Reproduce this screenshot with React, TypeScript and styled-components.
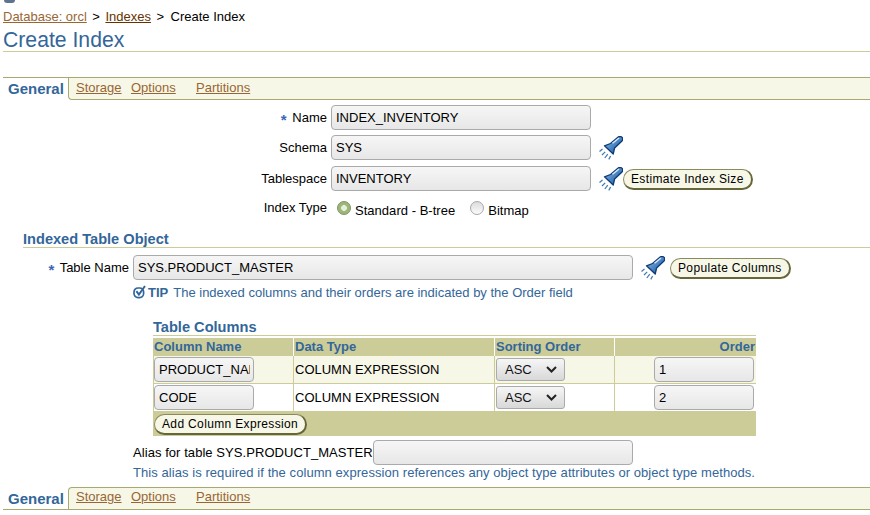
import React from "react";
import styled, { createGlobalStyle } from "styled-components";

const Global = createGlobalStyle`
  html, body { margin: 0; padding: 0; background: #fff; }
  body { font-family: "Liberation Sans", Arial, sans-serif; font-size: 13px; color: #000; }
`;
const Page = styled.div`
  width: 870px;
  height: 515px;
  overflow: hidden;
  box-sizing: border-box;
  padding-left: 3px;
`;
const Sliver = styled.div`
  height: 3px;
  width: 11px;
  margin-left: 1px;
  background: #5f7390;
  border-radius: 0 0 5px 5px;
`;
const Crumbs = styled.div`
  margin-top: 6px;
  height: 15px;
  line-height: 15px;
  display: flex;
  gap: 5.5px;
  white-space: pre;
`;
const CrumbLink = styled.a<{ $dark?: boolean }>`
  color: ${(p) => (p.$dark ? "#663300" : "#996633")};
  text-decoration: underline;
`;
const CrumbHere = styled.span`
  margin-left: 1px;
`;
const Title = styled.h1`
  margin: 0;
  font-size: 21.2px;
  font-weight: 400;
  line-height: 23px;
  height: 23px;
  color: #336699;
  border-bottom: 1px solid #cccc99;
  padding-top: 4px;
`;
const TabBar = styled.div<{ $bottom?: boolean }>`
  display: flex;
  height: 23px;
  margin-top: ${(p) => (p.$bottom ? "7px" : "25px")};
  border-top: ${(p) => (p.$bottom ? "0" : "1px solid #a8a870")};
  border-bottom: ${(p) => (p.$bottom ? "1px solid #a8a870" : "0")};
  box-sizing: border-box;
`;
const ActiveTab = styled.div<{ $bottom?: boolean }>`
  width: 65px;
  box-sizing: border-box;
  padding: ${(p) => (p.$bottom ? "3px 0 0 5px" : "2px 0 0 5px")};
  font-size: 15px;
  font-weight: 700;
  line-height: 18px;
  color: #336699;
`;
const TabStrip = styled.div<{ $bottom?: boolean }>`
  flex: 1;
  display: flex;
  background: #f7f7e7;
  border-left: 1px solid #a8a870;
  border-top: ${(p) => (p.$bottom ? "1px solid #a8a870" : "0")};
  border-radius: ${(p) => (p.$bottom ? "4px 0 0 0" : "0 0 0 4px")};
  border-bottom: ${(p) => (p.$bottom ? "0" : "1px solid #a8a870")};
  padding-top: ${(p) => (p.$bottom ? "1px" : "2px")};
  line-height: 16px;
`;
const TabLink = styled.a<{ $w: number }>`
  color: #996633;
  text-decoration: underline;
  margin-left: 7px;
  width: ${(p) => p.$w}px;
  flex: none;
  white-space: pre;
`;
const FormGrid = styled.div`
  display: grid;
  grid-template-columns: 324px 1fr;
  grid-template-rows: 25px 26px 25px 25px;
  column-gap: 4px;
  row-gap: 5px;
  margin-top: 5px;
`;
const Label = styled.div<{ $lift?: number }>`
  text-align: right;
  line-height: 25px;
  white-space: pre;
  margin-top: ${(p) => (p.$lift ? `${-p.$lift}px` : "0")};
`;
const Star = styled.span`
  color: #3b66b5;
  font-size: 15px;
  font-weight: 700;
  vertical-align: -3px;
  line-height: 0;
  margin-right: 2px;
`;
const FieldLine = styled.div`
  display: flex;
  align-items: center;
  height: 25px;
`;
const TextInput = styled.input<{ $w: number }>`
  width: ${(p) => p.$w}px;
  height: 25px;
  box-sizing: border-box;
  flex: none;
  border: 1px solid #aaaaaa;
  border-radius: 4px;
  background: linear-gradient(180deg, #f6f6f6, #e7e7e7);
  padding: 0 3px 0 4px;
  font: 13px "Liberation Sans", Arial, sans-serif;
  color: #000;
  outline: none;
`;
const PillButton = styled.button<{ $nudge?: boolean }>`
  height: 21px;
  box-sizing: border-box;
  flex: none;
  margin-top: ${(p) => (p.$nudge ? "2px" : "0")};
  padding: 0 7px;
  border: 1px solid #8a8a5c;
  border-right: 2px solid #66663a;
  border-bottom: 2px solid #66663a;
  border-radius: 11px;
  background: #f7f7e7;
  font: 12px "Liberation Sans", Arial, sans-serif;
  letter-spacing: 0.35px;
  color: #000;
  white-space: pre;
`;
const TorchSlot = styled.span<{ $after?: number }>`
  display: inline-flex;
  width: 24px;
  margin-left: 8px;
  margin-right: ${(p) => p.$after ?? 0}px;
  flex: none;
`;
const RadioRow = styled.div`
  display: flex;
  align-items: flex-start;
  height: 25px;
  padding: 5px 0 0 6px;
  box-sizing: border-box;
`;
const Radio = styled.span<{ $on?: boolean }>`
  width: 14px;
  height: 14px;
  flex: none;
  box-sizing: border-box;
  border-radius: 50%;
  border: 1px solid ${(p) => (p.$on ? "#7d9164" : "#a8a8a8")};
  background: ${(p) =>
    p.$on
      ? "radial-gradient(circle, #e9eddc 0 2.6px, #9cb878 3.2px)"
      : "linear-gradient(180deg,#dcdcdc,#fbfbfb)"};
`;
const RadioText = styled.span<{ $gap: number }>`
  margin: 2px ${(p) => p.$gap}px 0 4px;
  line-height: 15px;
  letter-spacing: 0.03px;
`;
const Section = styled.h2`
  margin: 10px 0 0 20px;
  font-size: 14.6px;
  line-height: 16px;
  font-weight: 700;
  color: #336699;
  border-bottom: 1px solid #cccc99;
`;
const TableNameRow = styled.div`
  display: flex;
  align-items: center;
  margin-top: 7px;
`;
const NameLabel = styled.div`
  width: 126px;
  margin-right: 4px;
  text-align: right;
  white-space: pre;
`;
const TipRow = styled.div`
  display: flex;
  align-items: center;
  margin: 4px 0 0 130px;
  height: 16px;
  color: #336699;
  white-space: pre;
`;
const TipWord = styled.b`
  margin: 0 5px 0 2px;
`;
const ColumnsBlock = styled.div`
  margin: 19px 0 0 150px;
  width: 603px;
`;
const ColumnsTitle = styled.div`
  font-size: 14.6px;
  font-weight: 700;
  line-height: 16px;
  color: #336699;
  border-bottom: 1px solid #cccc99;
`;
const Table = styled.table`
  width: 603px;
  margin-top: 2px;
  border-collapse: separate;
  border-spacing: 0;
  table-layout: fixed;
`;
const Head = styled.th<{ $right?: boolean }>`
  background: #cccc99;
  color: #336699;
  font-size: 13px;
  font-weight: 700;
  line-height: 15px;
  height: 18px;
  padding: 0 0 1px 1px;
  box-sizing: border-box;
  text-align: ${(p) => (p.$right ? "right" : "left")};
  border-right: 1px solid #fff;
  &:last-child { border-right: 0; padding-right: 1px; }
`;
const Cell = styled.td<{ $odd?: boolean; $right?: boolean }>`
  background: ${(p) => (p.$odd ? "#f7f7e7" : "#fff")};
  height: 28px;
  padding: 0 0 0 1px;
  box-sizing: border-box;
  border-right: 1px solid #cccc99;
  border-bottom: 1px solid #cccc99;
  text-align: ${(p) => (p.$right ? "right" : "left")};
  white-space: pre;
  &:first-child { border-left: 1px solid #cccc99; padding-left: 0; }
  &:last-child { border-right: 0; padding-right: 2px; }
  & > input { vertical-align: middle; }
`;
const SelectBox = styled.div`
  width: 69px;
  height: 23px;
  box-sizing: border-box;
  border: 1px solid #aaaaaa;
  border-radius: 3px;
  background: linear-gradient(180deg, #f6f6f6, #d8d8d8);
  display: flex;
  align-items: center;
  justify-content: space-between;
  padding: 0 7px 0 8px;
  color: #111;
`;
const FooterCell = styled.td`
  background: #cccc99;
  height: 24px;
  padding: 0 0 0 1px;
  box-sizing: border-box;
`;
const AliasRow = styled.div`
  display: flex;
  align-items: center;
  margin: 4px 0 0 130px;
`;
const AliasLabel = styled.span`
  letter-spacing: 0.06px;
  white-space: pre;
`;
const Help = styled.div`
  margin: 0 0 0 130px;
  line-height: 15px;
  height: 15px;
  color: #336699;
  white-space: pre;
  letter-spacing: 0.065px;
`;

const Torch = () => (
  <svg width="24" height="24" viewBox="0 0 24 24">
    <defs>
      <linearGradient id="tb" x1="0" y1="0" x2="1" y2="1">
        <stop offset="0" stopColor="#a6cbea" />
        <stop offset="0.5" stopColor="#4a86c4" />
        <stop offset="1" stopColor="#174a88" />
      </linearGradient>
    </defs>
    <path
      d="M11.5 7.5 L19.5 0.8 Q21.5 -0.2 23.2 1.4 Q24.4 3.2 23 5 L15.6 12 L14.2 18 L5.5 9.8 Z"
      fill="url(#tb)"
      stroke="#0f3a76"
      strokeWidth="1.3"
      strokeLinejoin="round"
    />
    <path d="M13.5 7.2 L20 2" stroke="#d8e8f6" strokeWidth="1.4" fill="none" />
    <g stroke="#3f78b0" strokeWidth="1.2" fill="none">
      <path d="M0.5 15.5 L3.5 13" />
      <path d="M3 19 L6.2 15.8" />
      <path d="M5.8 22 L8.8 18.2" />
      <path d="M9.8 23.4 L11.6 20" />
    </g>
  </svg>
);

const Check = () => (
  <svg width="13" height="14" viewBox="0 0 13 14">
    <rect x="1" y="3" width="9.6" height="9.6" rx="4" fill="none" stroke="#336699" strokeWidth="1.7" />
    <path d="M3.4 6.2 L5.9 9.6 L12 1" fill="none" stroke="#336699" strokeWidth="2" />
  </svg>
);

const Chevron = () => (
  <svg width="11" height="7" viewBox="0 0 11 7">
    <path d="M1 1 L5.5 5.5 L10 1" fill="none" stroke="#222" strokeWidth="2" />
  </svg>
);

const Tabs = ({ bottom }: { bottom?: boolean }) => (
  <TabBar $bottom={bottom}>
    <ActiveTab $bottom={bottom}>General</ActiveTab>
    <TabStrip $bottom={bottom}>
      <TabLink $w={48}>Storage</TabLink>
      <TabLink $w={58}>Options</TabLink>
      <TabLink $w={60}>Partitions</TabLink>
    </TabStrip>
  </TabBar>
);

export default function App() {
  return (
    <Page>
      <Global />
      <Sliver />
      <Crumbs>
        <CrumbLink>Database: orcl</CrumbLink>
        <span>&gt;</span>
        <CrumbLink $dark>Indexes</CrumbLink>
        <span>&gt;</span>
        <CrumbHere>Create Index</CrumbHere>
      </Crumbs>
      <Title>Create Index</Title>
      <Tabs />
      <FormGrid>
        <Label><Star>*</Star> Name</Label>
        <FieldLine><TextInput $w={260} readOnly value="INDEX_INVENTORY" /></FieldLine>
        <Label>Schema</Label>
        <FieldLine>
          <TextInput $w={260} readOnly value="SYS" />
          <TorchSlot><Torch /></TorchSlot>
        </FieldLine>
        <Label>Tablespace</Label>
        <FieldLine>
          <TextInput $w={260} readOnly value="INVENTORY" />
          <TorchSlot><Torch /></TorchSlot>
          <PillButton $nudge>Estimate Index Size</PillButton>
        </FieldLine>
        <Label $lift={1}>Index Type</Label>
        <RadioRow>
          <Radio $on />
          <RadioText $gap={15}>Standard - B-tree</RadioText>
          <Radio />
          <RadioText $gap={0}>Bitmap</RadioText>
        </RadioRow>
      </FormGrid>
      <Section>Indexed Table Object</Section>
      <TableNameRow>
        <NameLabel><Star>*</Star> Table Name</NameLabel>
        <TextInput $w={500} readOnly value="SYS.PRODUCT_MASTER" />
        <TorchSlot $after={5}><Torch /></TorchSlot>
        <PillButton $nudge>Populate Columns</PillButton>
      </TableNameRow>
      <TipRow>
        <Check />
        <TipWord>TIP</TipWord>The indexed columns and their orders are indicated by the Order field
      </TipRow>
      <ColumnsBlock>
        <ColumnsTitle>Table Columns</ColumnsTitle>
        <Table>
          <colgroup>
            <col width={141} />
            <col width={201} />
            <col width={120} />
            <col width={141} />
          </colgroup>
          <thead>
            <tr>
              <Head>Column Name</Head>
              <Head>Data Type</Head>
              <Head>Sorting Order</Head>
              <Head $right>Order</Head>
            </tr>
          </thead>
          <tbody>
            <tr>
              <Cell $odd><TextInput $w={100} readOnly value="PRODUCT_NAME" /></Cell>
              <Cell $odd>COLUMN EXPRESSION</Cell>
              <Cell $odd><SelectBox>ASC<Chevron /></SelectBox></Cell>
              <Cell $odd $right><TextInput $w={100} readOnly value="1" /></Cell>
            </tr>
            <tr>
              <Cell><TextInput $w={100} readOnly value="CODE" /></Cell>
              <Cell>COLUMN EXPRESSION</Cell>
              <Cell><SelectBox>ASC<Chevron /></SelectBox></Cell>
              <Cell $right><TextInput $w={100} readOnly value="2" /></Cell>
            </tr>
            <tr>
              <FooterCell colSpan={4}><PillButton>Add Column Expression</PillButton></FooterCell>
            </tr>
          </tbody>
        </Table>
      </ColumnsBlock>
      <AliasRow>
        <AliasLabel>Alias for table SYS.PRODUCT_MASTER</AliasLabel>
        <TextInput $w={260} readOnly value="" />
      </AliasRow>
      <Help>This alias is required if the column expression references any object type attributes or object type methods.</Help>
      <Tabs bottom />
    </Page>
  );
}
